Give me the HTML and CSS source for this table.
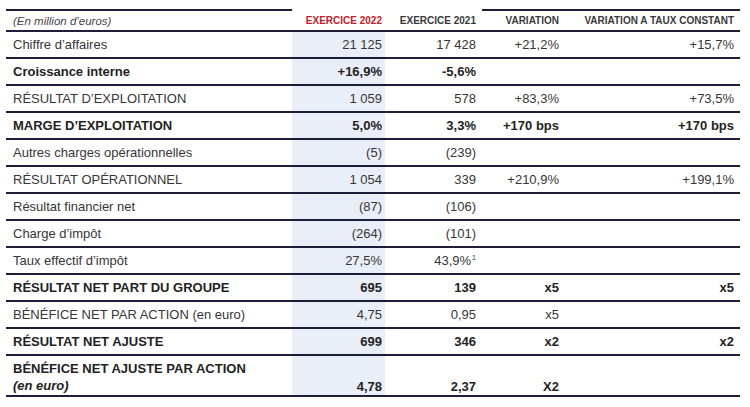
FILE: index.html
```html
<!DOCTYPE html>
<html lang="fr">
<head>
<meta charset="utf-8">
<title>Compte de résultat</title>
<link rel="stylesheet" href="styles.css">
</head>
<body>
<table class="fin">
  <colgroup>
    <col class="c1"><col class="c2"><col class="c3"><col class="c4"><col class="c5">
  </colgroup>
  <thead>
    <tr>
      <th class="label top">(En million d’euros)</th>
      <th class="red">EXERCICE 2022</th>
      <th>EXERCICE 2021</th>
      <th class="top">VARIATION</th>
      <th class="top">VARIATION A TAUX CONSTANT</th>
    </tr>
  </thead>
  <tbody>
    <tr><td class="label">Chiffre d’affaires</td><td class="cur">21 125</td><td>17 428</td><td>+21,2%</td><td>+15,7%</td></tr>
    <tr class="b"><td class="label">Croissance interne</td><td class="cur">+16,9%</td><td>-5,6%</td><td></td><td></td></tr>
    <tr><td class="label">RÉSULTAT D’EXPLOITATION</td><td class="cur">1 059</td><td>578</td><td>+83,3%</td><td>+73,5%</td></tr>
    <tr class="b"><td class="label">MARGE D’EXPLOITATION</td><td class="cur">5,0%</td><td>3,3%</td><td>+170 bps</td><td>+170 bps</td></tr>
    <tr><td class="label">Autres charges opérationnelles</td><td class="cur">(5)</td><td>(239)</td><td></td><td></td></tr>
    <tr><td class="label">RÉSULTAT OPÉRATIONNEL</td><td class="cur">1 054</td><td>339</td><td>+210,9%</td><td>+199,1%</td></tr>
    <tr><td class="label">Résultat financier net</td><td class="cur">(87)</td><td>(106)</td><td></td><td></td></tr>
    <tr><td class="label">Charge d’impôt</td><td class="cur">(264)</td><td>(101)</td><td></td><td></td></tr>
    <tr><td class="label">Taux effectif d’impôt</td><td class="cur">27,5%</td><td>43,9%<sup class="note">1</sup></td><td></td><td></td></tr>
    <tr class="b"><td class="label">RÉSULTAT NET PART DU GROUPE</td><td class="cur">695</td><td>139</td><td>x5</td><td>x5</td></tr>
    <tr><td class="label">BÉNÉFICE NET PAR ACTION (en euro)</td><td class="cur">4,75</td><td>0,95</td><td>x5</td><td></td></tr>
    <tr class="b"><td class="label">RÉSULTAT NET AJUSTE</td><td class="cur">699</td><td>346</td><td>x2</td><td>x2</td></tr>
    <tr class="b tall"><td class="label two">BÉNÉFICE NET AJUSTE PAR ACTION<br><em>(en euro)</em></td><td class="cur">4,78</td><td>2,37</td><td>X2</td><td></td></tr>
  </tbody>
</table>
</body>
</html>
```

FILE: styles.css
```css
html, body {
  margin: 0;
  padding: 0;
  background: #ffffff;
}

body {
  font-family: "Liberation Sans", Arial, sans-serif;
  color: #363636;
}

.fin {
  margin: 9px 0 0 6px;
  width: 734px;
  table-layout: fixed;
  border-collapse: separate;
  border-spacing: 0;
}

.c1 { width: 286px; }
.c2 { width: 93px; }
.c3 { width: 97px; }
.c4 { width: 83px; }
.c5 { width: 175px; }

.fin th {
  height: 19px;
  padding: 0 6px 0 0;
  border-top: 2px solid transparent;
  border-bottom: 2px solid #1e1e3a;
  font-size: 10px;
  font-weight: bold;
  color: #3a3a3a;
  text-align: right;
  vertical-align: middle;
  white-space: nowrap;
}

.fin th.top {
  border-top-color: #1e1e3a;
}

.fin th.label {
  text-align: left;
  padding-left: 7px;
  font-size: 11.5px;
  font-weight: normal;
  font-style: italic;
  color: #444;
}

.fin th.red {
  color: #c0202a;
  padding-right: 3px;
}

.fin td {
  height: 25px;
  padding: 0 6px 0 0;
  border-bottom: 2px solid #1e1e3a;
  font-size: 13px;
  line-height: 15px;
  text-align: right;
  vertical-align: middle;
  white-space: nowrap;
}

.fin td.label {
  text-align: left;
  padding-left: 7px;
}

.fin td.cur {
  background: #e9eef8;
  padding-right: 3px;
}

.fin tr.b td {
  font-weight: bold;
  color: #232323;
}

.fin tr.tall td {
  height: 38px;
  padding-bottom: 1px;
  vertical-align: bottom;
}

.fin td.two {
  line-height: 17px;
}

.note {
  font-size: 7px;
  line-height: 0;
  vertical-align: 5px;
  margin-left: 1px;
}
```
